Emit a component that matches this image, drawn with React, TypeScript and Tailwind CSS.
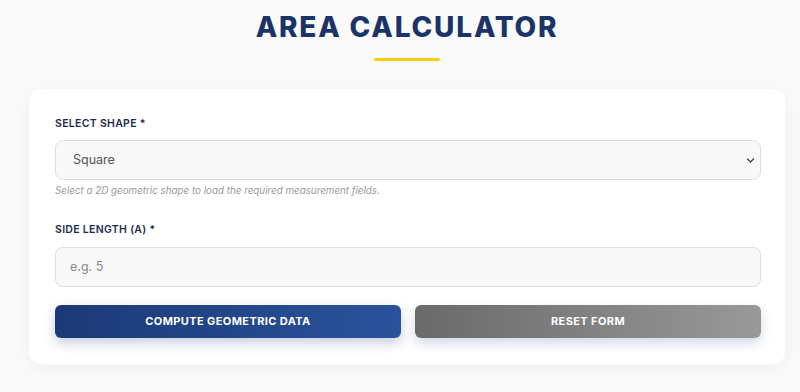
import React from "react";

export default function App() {
  const font = { fontFamily: "Inter, 'Open Sans', sans-serif" };
  return (
    <div className="min-h-[392px] w-full bg-[#fafafa]" style={font}>
      <div className="ml-[29px] w-[756px] pt-[9px]">
        <h1 className="text-center text-[28px] leading-[36px] font-extrabold tracking-[1.8px] text-[#1b3468]">
          AREA CALCULATOR
        </h1>
        <div className="mx-auto mt-[13px] h-[3px] w-[66px] rounded-full bg-[#f7cf0f]" />
        <div className="mt-[28px] rounded-[12px] bg-white pl-[26px] pr-[24px] pt-[27px] pb-[26px] shadow-[0_4px_20px_rgba(0,0,0,0.05)]">
          <label className="block text-[10.5px] leading-[16px] font-semibold tracking-[0.3px] text-[#1e2b4d]">
            SELECT SHAPE *
          </label>
          <div className="relative mt-[8px] flex h-[40px] items-center rounded-[8px] border border-[#dedede] bg-[#f8f8f8] pl-[17px]">
            <span className="text-[12.5px] text-[#555]">Square</span>
            <svg className="absolute right-[5px] top-[16px]" width="9" height="7" viewBox="0 0 9 7" fill="none">
              <path d="M1.5 2 L4.5 5 L7.5 2" stroke="#444" strokeWidth="1.4" strokeLinecap="round" strokeLinejoin="round" />
            </svg>
          </div>
          <p className="mt-[4px] text-[9.8px] leading-[14px] italic text-[#9a9a9a]">
            Select a 2D geometric shape to load the required measurement fields.
          </p>
          <label className="mt-[24px] block text-[10.5px] leading-[16px] font-semibold tracking-[0.3px] text-[#1e2b4d]">
            SIDE LENGTH (A) *
          </label>
          <div className="mt-[9px] flex h-[40px] items-center rounded-[8px] border border-[#dedede] bg-[#f8f8f8] pl-[14px]">
            <span className="text-[12.5px] text-[#8a8a8a]">e.g. 5</span>
          </div>
          <div className="mt-[18px] flex gap-[14px]">
            <button className="flex h-[33px] flex-1 items-center justify-center rounded-[6px] bg-gradient-to-r from-[#1c3977] to-[#2a539c] text-[11px] font-bold tracking-[0.4px] text-white shadow-[0_5px_12px_rgba(30,58,120,0.25)]">
              COMPUTE GEOMETRIC DATA
            </button>
            <button className="flex h-[33px] flex-1 items-center justify-center rounded-[6px] bg-gradient-to-r from-[#6a6a6a] to-[#999999] text-[11px] font-bold tracking-[0.4px] text-white shadow-[0_5px_12px_rgba(30,58,120,0.2)]">
              RESET FORM
            </button>
          </div>
        </div>
      </div>
    </div>
  );
}
